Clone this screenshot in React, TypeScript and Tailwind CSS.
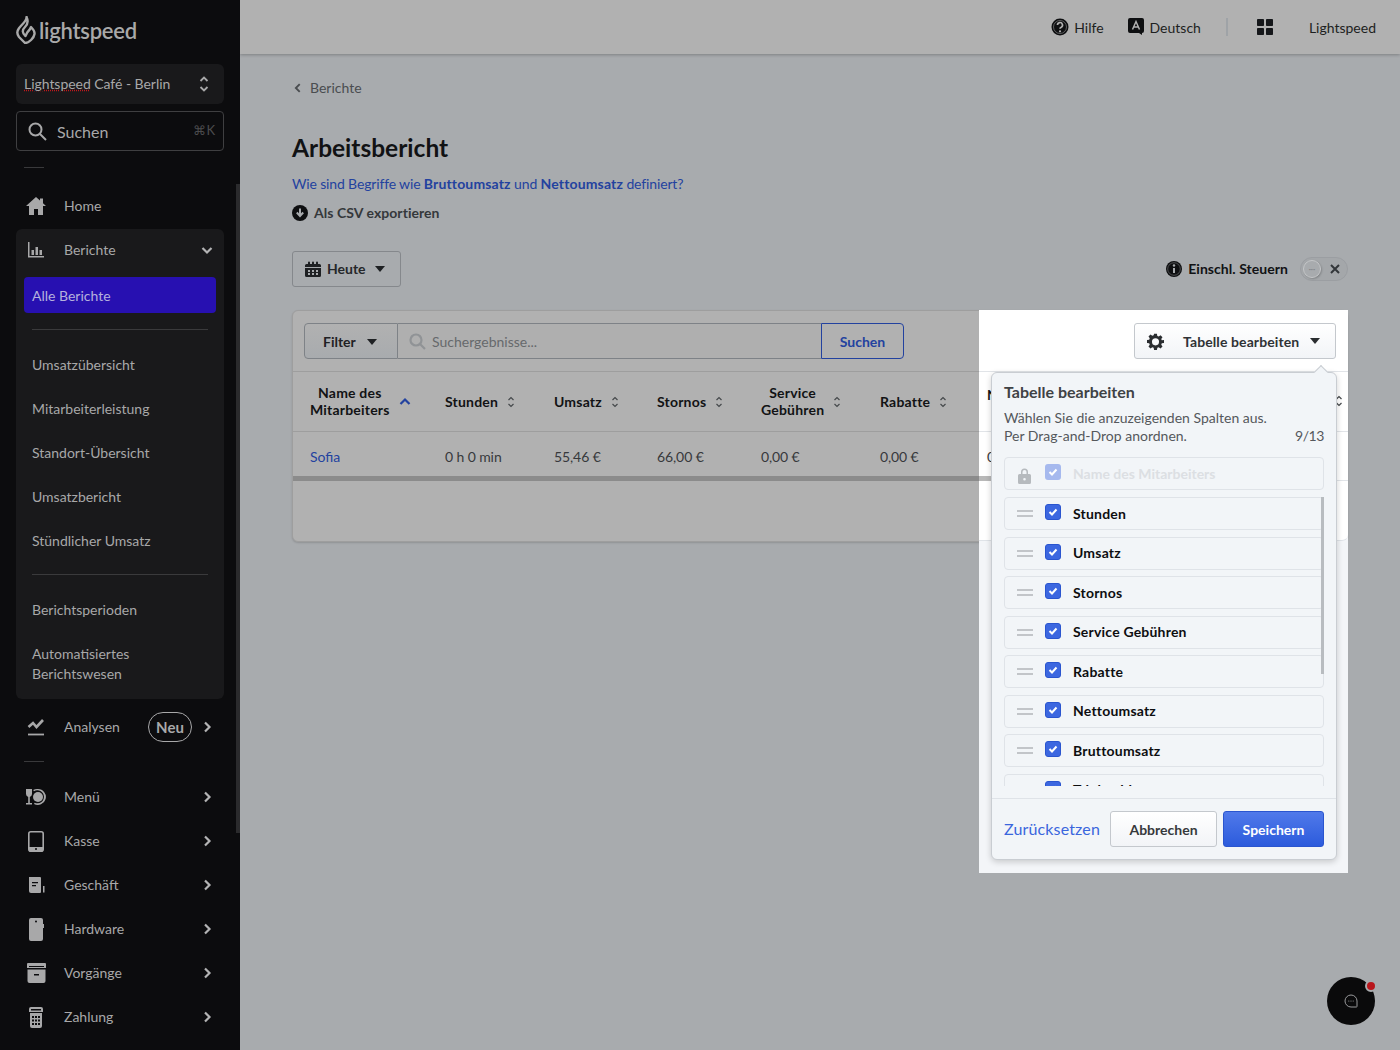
import React from "react";

const Chevron = ({ dir = "right", className = "" }: { dir?: "right" | "down" | "left" | "up"; className?: string }) => {
  const d = { right: "M5 2.5 9.5 7 5 11.5", left: "M9 2.5 4.5 7 9 11.5", down: "M2.5 5 7 9.5 11.5 5", up: "M2.5 9 7 4.5 11.5 9" }[dir];
  return (
    <svg width="14" height="14" viewBox="0 0 14 14" fill="none" stroke="currentColor" strokeWidth="2.2" className={className}>
      <path d={d} />
    </svg>
  );
};

const Caret = ({ className = "" }: { className?: string }) => (
  <svg width="10" height="6" viewBox="0 0 10 6" className={className} fill="currentColor">
    <path d="M0 0h10L5 6z" />
  </svg>
);

const Sort = ({ className = "" }: { className?: string }) => (
  <svg width="8" height="12" viewBox="0 0 8 12" fill="none" stroke="currentColor" strokeWidth="1.2" className={className}>
    <path d="M1.5 4 4 1.5 6.5 4M1.5 8 4 10.5 6.5 8" />
  </svg>
);

const Home = () => (
  <svg width="20" height="18" viewBox="0 0 20 18" fill="currentColor"><path d="M10 0 0 9h3v9h5v-6h4v6h5V9h3l-3-2.7V1.500h-3v2.100z" /></svg>
);
const Bars = () => (
  <svg width="18" height="16" viewBox="0 0 18 16" fill="currentColor"><path d="M1 0h1.500v14H17v1.500H1z" /><path d="M4.500 8h2.500v5H4.500zM8.500 5h2.500v8H8.500zM12.500 8h2.500v5h-2.500z" /></svg>
);
const Trend = () => (
  <svg width="18" height="18" viewBox="0 0 18 18" fill="none" stroke="currentColor"><path d="M1.500 9 6 5l3.500 4L16 2" strokeWidth="2.600" /><path d="M1 16.500h16" strokeWidth="1.800" /></svg>
);
const MenuIcon = () => (
  <svg width="21" height="18" viewBox="0 0 21 18" fill="currentColor"><path d="M0 1h6v5a3 3 0 0 1-2.200 2.900V15H6v1.500H0V15h2.200V8.900A3 3 0 0 1 0 6z" /><path d="M12 1a8 8 0 1 1-4 15l.700-1.300A6.500 6.500 0 1 0 8 3.300L7.200 2A8 8 0 0 1 12 1z" /><circle cx="12" cy="9" r="5" /></svg>
);
const Tablet = () => (
  <svg width="16" height="21" viewBox="0 0 16 21" fill="none"><rect x=".8" y=".8" width="14.400" height="19.400" rx="2" stroke="currentColor" strokeWidth="1.600" /><path d="M1 16h14v3a1.500 1.500 0 0 1-1.500 1.500h-11A1.500 1.500 0 0 1 1 19z" fill="currentColor" /><circle cx="8" cy="18" r="1" fill="#0c0c0e" /></svg>
);
const Store = () => (
  <svg width="17" height="16" viewBox="0 0 17 16" fill="currentColor"><path d="M1 0h11a1 1 0 0 1 1 1v14a1 1 0 0 1-1 1H3a2 2 0 0 1-2-2z" /><path d="M15 9h1.500v6.500H15z" /><path d="M4 5h6v1.300H4zM4 8h4v1.300H4z" fill="#0c0c0e" /></svg>
);
const Hardware = () => (
  <svg width="15" height="23" viewBox="0 0 15 23" fill="currentColor"><path d="M2 0h10a2 2 0 0 1 2 2v4h1v4h-1v11a2 2 0 0 1-2 2H2a2 2 0 0 1-2-2V2a2 2 0 0 1 2-2z" /><circle cx="7" cy="3.500" r="1" fill="#0c0c0e" /></svg>
);
const Archive = () => (
  <svg width="19" height="20" viewBox="0 0 19 20" fill="currentColor"><path d="M1 0h17a1 1 0 0 1 1 1v4H0V1a1 1 0 0 1 1-1z" /><path d="M2 3h15v1H2z" fill="#0c0c0e" /><path d="M.500 6.500h18V18a2 2 0 0 1-2 2h-14a2 2 0 0 1-2-2z" /><path d="M7 11h5v1.500H7z" fill="#0c0c0e" /></svg>
);
const Payment = () => (
  <svg width="16" height="21" viewBox="0 0 16 21" fill="currentColor"><path d="M3 0h10a2 2 0 0 1 2 2v3H1V2a2 2 0 0 1 2-2z" /><path d="M3 2h10v1.500H3z" fill="#0c0c0e" /><path d="M2 6h12v13a2 2 0 0 1-2 2H4a2 2 0 0 1-2-2z" /><path d="M4 9h2v2H4zM7 9h2v2H7zM10 9h2v2h-2zM4 12.500h2v2H4zM7 12.500h2v2H7zM10 12.500h2v2h-2zM4 16h2v2H4zM7 16h2v2H7zM10 16h2v2h-2z" fill="#0c0c0e" /></svg>
);

const NavRow = ({ icon, label, badge, chevron = true }: { icon: React.ReactNode; label: string; badge?: boolean; chevron?: boolean }) => (
  <div className="flex h-11 items-center pl-4 pr-[26px] text-[#a8a8a9]">
    <span className="flex w-10 items-center justify-center">{icon}</span>
    <span className="ml-2 flex-1 text-sm">{label}</span>
    {badge && (
      <span className="mr-2 flex h-[30px] w-11 items-center justify-center rounded-[15px] border border-[#a8a8a9] text-[15px] font-bold">Neu</span>
    )}
    {chevron && <Chevron className="text-[#b4b4b5]" />}
  </div>
);

const SubItem = ({ children }: { children: React.ReactNode }) => (
  <div className="flex h-11 items-center pl-4 pr-2 text-sm text-[#a8a8a9]">{children}</div>
);

const Sidebar = () => (
  <aside className="relative flex h-[1050px] w-60 shrink-0 flex-col overflow-hidden bg-[#0c0c0e]">
    <div className="flex h-16 items-start pl-4 pt-4">
      <svg width="20" height="28" viewBox="0 0 20 28" className="text-[#a9a9a9]" fill="none" stroke="currentColor" strokeWidth="2.400" strokeLinejoin="round">
        <path d="M10.500 1 C11 5 5 9 2.500 13 C.500 16 1.500 19 3 21 L9 27 C13 27 18 22 18.500 18 C19 15 17 13 15 11 C14 14 12 15 11 17 L9.500 20 C6 17 6 14 9 11 C12 8 12 4 10.500 1 Z" />
      </svg>
      <span className="ml-[3px] text-[22px] font-semibold leading-[30px] tracking-[-0.25px] text-[#a9a9a9]">lightspeed</span>
    </div>
    <div className="mx-4 flex h-10 items-center justify-between rounded-md bg-[#19191b] pl-2 pr-[15px] text-sm tracking-[-0.04px] text-[#a8a8a9]">
      <span>
        <span className="underline decoration-[#c0181c] decoration-dotted">Lightspeed</span> Café - Berlin
      </span>
      <svg width="10" height="16" viewBox="0 0 10 16" fill="none" stroke="currentColor" strokeWidth="1.800"><path d="M1.500 5 5 1.500 8.500 5M1.500 11 5 14.500 8.500 11" /></svg>
    </div>
    <div className="mx-4 mt-[7px] flex h-10 items-center rounded border border-[#3f3f41] pl-[11px] pr-2 text-[#a8a8a9]">
      <svg width="19" height="19" viewBox="0 0 19 19" fill="none" stroke="currentColor" strokeWidth="2"><circle cx="7.500" cy="7.500" r="6" /><path d="m12 12 6 6" /></svg>
      <span className="ml-[10px] mt-px flex-1 text-base">Suchen</span>
      <span className="text-[13px] text-[#4b4b4d]">⌘K</span>
    </div>
    <div className="ml-6 mt-4 h-px w-5 bg-[#39393b]" />
    <div className="mt-4">
      <NavRow icon={<Home />} label="Home" chevron={false} />
    </div>
    <div className="mx-4 mt-px h-[470px] rounded-md bg-[#19191b]">
      <div className="-mx-4 -mt-px">
        <div className="flex h-11 items-center pl-4 pr-[26px] text-[#a8a8a9]">
          <span className="flex w-10 items-center justify-center"><Bars /></span>
          <span className="ml-2 flex-1 text-sm">Berichte</span>
          <Chevron dir="down" className="-mt-px text-[#b4b4b5]" />
        </div>
      </div>
      <div className="mx-2 mt-[5px] flex h-9 items-center rounded bg-[#2710b1] pl-2 pt-px text-sm text-[#b5b1dd]">Alle Berichte</div>
      <div className="mx-4 mt-4 h-px bg-[#3a3a3c]" />
      <div className="mt-[13px]">
        <SubItem>Umsatzübersicht</SubItem>
        <SubItem>Mitarbeiterleistung</SubItem>
        <SubItem>Standort-Übersicht</SubItem>
        <SubItem>Umsatzbericht</SubItem>
        <SubItem>Stündlicher Umsatz</SubItem>
      </div>
      <div className="mx-4 mt-[11px] h-px bg-[#3a3a3c]" />
      <div className="mt-[13px]">
        <SubItem>Berichtsperioden</SubItem>
        <div className="px-4 pt-3 text-sm leading-5 text-[#a8a8a9]">Automatisiertes<br />Berichtswesen</div>
      </div>
    </div>
    <div className="mt-[6px]">
      <NavRow icon={<Trend />} label="Analysen" badge />
    </div>
    <div className="ml-6 mt-[12px] h-px w-5 bg-[#39393b]" />
    <div className="mt-[13px]">
      <NavRow icon={<MenuIcon />} label="Menü" />
      <NavRow icon={<Tablet />} label="Kasse" />
      <NavRow icon={<Store />} label="Geschäft" />
      <NavRow icon={<Hardware />} label="Hardware" />
      <NavRow icon={<Archive />} label="Vorgänge" />
      <NavRow icon={<Payment />} label="Zahlung" />
    </div>
    <div className="absolute right-0 top-[184px] h-[649px] w-1 bg-[#2b2b2d]" />
  </aside>
);

const TopBar = () => (
  <header className="flex h-[54px] items-center justify-end bg-[#b1b1b1] pr-6 text-sm text-[#1d1f21] shadow-[0_1px_3px_rgba(0,0,0,0.25)]">
    <svg width="18" height="18" viewBox="0 0 18 18"><circle cx="9" cy="9" r="8.500" fill="#0e0f11" /><circle cx="9" cy="9" r="6.500" fill="none" stroke="#b1b1b1" strokeWidth=".5" /><path d="M6.500 7a2.500 2.500 0 1 1 3.700 2.200c-.8.400-1.200.8-1.200 1.600" fill="none" stroke="#b1b1b1" strokeWidth="1.700" /><circle cx="9" cy="13.300" r="1.100" fill="#b1b1b1" /></svg>
    <span className="ml-[5px] mt-px">Hilfe</span>
    <svg width="16" height="17" viewBox="0 0 16 17" className="ml-6 -mt-px"><path d="M2 0h12a2 2 0 0 1 2 2v11a2 2 0 0 1-2 2v2l-3-2H2a2 2 0 0 1-2-2V2a2 2 0 0 1 2-2z" fill="#0e0f11" /><path d="M4.500 11.500 8 3.500l3.500 8M5.800 9h4.400" fill="none" stroke="#b1b1b1" strokeWidth="1.500" /></svg>
    <span className="ml-[6px] mt-px">Deutsch</span>
    <div className="ml-[25px] h-[18px] w-[2px] bg-[#9fa3a7]" />
    <svg width="16" height="16" viewBox="0 0 16 16" fill="#15171a" className="ml-[29px]"><rect width="7" height="7" rx=".8" /><rect x="9" width="7" height="7" rx=".8" /><rect y="9" width="7" height="7" rx=".8" /><rect x="9" y="9" width="7" height="7" rx=".8" /></svg>
    <span className="ml-9 mt-px">Lightspeed</span>
  </header>
);

const Head = ({ children, active }: { children: React.ReactNode; active?: boolean }) => (
  <div className={active ? "flex items-center gap-2 pl-[17px] text-sm font-bold leading-[17px] tracking-[0.2px] text-[#121315]" : "flex items-center gap-[9px] pl-[18px] text-sm font-bold leading-[17px] tracking-[0.2px] text-[#121315]"}>
    <span className="-mt-px text-center">{children}</span>
    {active ? <Chevron dir="up" className="text-[#23429f]" /> : <Sort className="text-[#45484b]" />}
  </div>
);

const Cell = ({ children, blue }: { children: React.ReactNode; blue?: boolean }) => (
  <div className={blue ? "flex items-center pl-[17px] pt-[5px] text-sm text-[#23429f]" : "flex items-center pl-[18px] pt-[5px] text-sm tracking-[-0.1px] text-[#37393c]"}>{children}</div>
);

const Card = () => (
  <section className="mt-[23px] h-[232px] rounded-md border border-[#9e9e9e] bg-[#b1b1b1] shadow-[0_1px_2px_rgba(0,0,0,0.15)]">
    <div className="flex h-[61px] items-start border-b border-[#9e9e9e] pl-[11px] pt-3">
      <div className="flex h-9 w-[600px] text-sm">
        <div className="flex w-[94px] items-center justify-between rounded-l border border-[#7e8287] bg-gradient-to-b from-[#b1b1b1] to-[#a8abae] pl-[18px] pr-5 pt-px font-bold text-[#1f2124]">
          Filter <Caret className="text-[#1f2124]" />
        </div>
        <div className="flex flex-1 items-center border-y border-[#7e8287] bg-[#afafaf] pl-[11px] text-[#66696c]">
          <svg width="17" height="17" viewBox="0 0 17 17" fill="none" stroke="#909396" strokeWidth="2.200"><circle cx="7" cy="7" r="5.500" /><path d="m11 11 5 5" /></svg>
          <span className="ml-[6px] mt-px">Suchergebnisse...</span>
        </div>
        <div className="flex w-[83px] items-center justify-center rounded-r border border-[#23429f] pt-px font-bold text-[#23429f]">Suchen</div>
      </div>
    </div>
    <div className="grid h-[60px] grid-cols-[134px_109px_103px_104px_119px_107px_1fr] border-b border-[#9e9e9e]">
      <Head active>Name des<br />Mitarbeiters</Head>
      <Head>Stunden</Head>
      <Head>Umsatz</Head>
      <Head>Stornos</Head>
      <Head>Service<br />Gebühren</Head>
      <Head>Rabatte</Head>
    </div>
    <div className="grid h-11 grid-cols-[134px_109px_103px_104px_119px_107px_1fr]">
      <Cell blue>Sofia</Cell>
      <Cell>0 h 0 min</Cell>
      <Cell>55,46 €</Cell>
      <Cell>66,00 €</Cell>
      <Cell>0,00 €</Cell>
      <Cell>0,00 €</Cell>
    </div>
    <div className="h-[5px] bg-[#8b8b8b]" />
  </section>
);

const Check = ({ faded }: { faded?: boolean }) => (
  <span className={faded ? "flex h-4 w-4 items-center justify-center rounded-[3px] bg-[#a6b9ee]" : "flex h-4 w-4 items-center justify-center rounded-[3px] border border-[#2a55cf] bg-[#3c67e0]"}>
    <svg width="10" height="8" viewBox="0 0 10 8" fill="none" stroke="#fff" strokeWidth="2"><path d="m1.500 4 2.500 2.500 4.500-5" /></svg>
  </span>
);

const ColRow = ({ label }: { label: string }) => (
  <div className="flex h-[33px] shrink-0 items-center rounded border border-[#dfe3e8] pl-3">
    <span className="flex w-4 flex-col gap-[3px]">
      <span className="h-[2px] w-4 bg-[#c2c5c9]" />
      <span className="h-[2px] w-4 bg-[#c2c5c9]" />
    </span>
    <span className="ml-3 -mt-[3px]"><Check /></span>
    <span className="ml-3 text-sm font-bold tracking-[0.2px] text-[#0d0e10]">{label}</span>
  </div>
);

const Spotlight = () => (
  <div className="absolute left-[979px] top-[310px] h-[563px] w-[369px] overflow-hidden bg-[#f3f5f8]">
    <div className="h-[231px] rounded-br-md border-b border-[#dfe3e8] bg-white">
      <div className="flex h-[62px] items-start justify-end border-b border-[#e1e4e8] pr-3 pt-[13px]">
        <div className="flex h-9 w-[202px] items-center rounded-[3px] border border-[#c4c8cd] bg-gradient-to-b from-white to-[#f2f4f7] pl-3 pr-[15px] text-sm font-bold tracking-[0.1px] text-[#2f3235]">
          <svg width="17" height="17" viewBox="0 0 24 24" fill="#2a2d30"><path fillRule="evenodd" d="M10 1h4l.6 3.100 1.900.8 2.600-1.800 2.800 2.800-1.800 2.600.8 1.900L24 10v4l-3.100.6-.8 1.900 1.800 2.600-2.800 2.800-2.600-1.800-1.900.8L14 24h-4l-.6-3.100-1.900-.8-2.600 1.800-2.800-2.800 1.800-2.600-.8-1.900L0 14v-4l3.100-.6.800-1.900-1.800-2.600 2.800-2.800 2.600 1.800 1.900-.8zM12 7.500a5 5 0 1 0 0 10 5 5 0 0 0 0-10z" /></svg>
          <span className="ml-[19px] mt-px flex-1">Tabelle bearbeiten</span>
          <Caret className="text-[#2a2d30]" />
        </div>
      </div>
      <div className="relative h-[60px] border-b border-[#e1e4e8]">
        <span className="absolute left-2 top-[13px] text-sm font-bold text-[#121315]">N</span>
        <Sort className="absolute right-[5px] top-[23px] text-[#45484b]" />
      </div>
      <div className="relative h-[44px]">
        <span className="absolute left-2 top-[15px] text-sm text-[#37393c]">0</span>
      </div>
      <div className="flex h-[5px]">
        <div className="w-3 bg-[#b8b8b8]" />
        <div className="flex-1 border-b border-[#e1e4e8]" />
      </div>
    </div>
    <div className="absolute left-3 top-[62px] flex h-[488px] w-[346px] flex-col rounded-md border border-[#c9cdd2] bg-[#f2f5f8] shadow-[0_2px_6px_rgba(0,0,0,0.18)]">
      <div className="absolute -top-[6px] right-[10px] h-[10px] w-[10px] rotate-45 border-l border-t border-[#c9cdd2] bg-[#f2f5f8]" />
      <div className="px-3 pt-[9px]">
        <h2 className="text-base font-bold leading-[20px] text-[#3f4245]">Tabelle bearbeiten</h2>
        <p className="mt-[7px] text-sm leading-[18px] text-[#55585c]">Wählen Sie die anzuzeigenden Spalten aus.</p>
        <p className="flex justify-between text-sm leading-[18px] text-[#55585c]"><span>Per Drag-and-Drop anordnen.</span><span className="tracking-[-0.4px]">9/13</span></p>
        <div className="mt-[12px] flex h-[33px] items-center rounded border border-[#dfe3e8] pl-[13px]">
          <svg width="13" height="16" viewBox="0 0 13 16" fill="#b6babe" className="mt-1"><path fillRule="evenodd" d="M3 6V4a3.500 3.500 0 0 1 7 0v2h1.500A1.500 1.500 0 0 1 13 7.500v7a1.500 1.500 0 0 1-1.500 1.500h-10A1.500 1.500 0 0 1 0 14.500v-7A1.500 1.500 0 0 1 1.500 6zm1.500 0h4V4a2 2 0 0 0-4 0zm2 4a1.300 1.300 0 1 0 0 2.600 1.300 1.300 0 0 0 0-2.600z" /></svg>
          <span className="ml-[14px] -mt-[3px]"><Check faded /></span>
          <span className="ml-3 text-sm font-bold text-[#dcdfe3]">Name des Mitarbeiters</span>
        </div>
      </div>
      <div className="relative mx-3 mt-[7px] flex h-[289px] flex-col gap-[6.500px] overflow-hidden">
        <ColRow label="Stunden" />
        <ColRow label="Umsatz" />
        <ColRow label="Stornos" />
        <ColRow label="Service Gebühren" />
        <ColRow label="Rabatte" />
        <ColRow label="Nettoumsatz" />
        <ColRow label="Bruttoumsatz" />
        <ColRow label="Trinkgeld" />
        <div className="absolute right-0 top-0 h-[177px] w-[3px] bg-[#b8bcc0]" />
      </div>
      <div className="mt-3 flex flex-1 items-center border-t border-[#dfe3e8] px-3">
        <span className="flex-1 text-base tracking-[0.15px] text-[#3a66dd]">Zurücksetzen</span>
        <div className="flex h-9 w-[107px] items-center justify-center rounded-[3px] border border-[#c4c8cd] bg-gradient-to-b from-white to-[#f2f4f7] pt-px text-sm font-bold text-[#36393c]">Abbrechen</div>
        <div className="ml-[6px] flex h-9 w-[101px] items-center justify-center rounded-[3px] border border-[#2a55cf] bg-gradient-to-b from-[#5079ea] to-[#2c5bdc] pt-px text-sm font-bold text-white">Speichern</div>
      </div>
    </div>
  </div>
);

export default function App() {
  return (
    <div className="relative flex h-[1050px] w-[1400px] overflow-hidden bg-[#a8abae] font-['Lato','Noto_Sans',sans-serif]">
      <Sidebar />
      <main className="flex-1">
        <TopBar />
        <div className="px-[52px]">
          <div className="mt-[25px] flex h-[18px] items-center text-sm text-[#4a4d50]">
            <Chevron dir="left" className="h-3 w-3" />
            <span className="ml-[6px]">Berichte</span>
          </div>
          <h1 className="mt-[35px] text-[24.5px] font-bold leading-8 text-[#111214]">Arbeitsbericht</h1>
          <p className="mt-[11px] text-sm leading-[18px] tracking-[-0.15px] text-[#23429f]">
            Wie sind Begriffe wie <b className="tracking-[0.15px]">Bruttoumsatz</b> und <b className="tracking-[0.15px]">Nettoumsatz</b> definiert?
          </p>
          <div className="mt-[11px] flex h-[18px] items-center text-sm font-bold tracking-[0.05px] text-[#35383b]">
            <svg width="16" height="16" viewBox="0 0 16 16"><circle cx="8" cy="8" r="8" fill="#0e0f11" /><path d="M8 3.500v6.500M4.800 7.500 8 11l3.200-3.500" fill="none" stroke="#a8abae" strokeWidth="2" /></svg>
            <span className="ml-[6px]">Als CSV exportieren</span>
          </div>
          <div className="mt-[29px] flex items-center justify-between">
            <div className="flex h-9 w-[109px] items-center rounded-[3px] border border-[#85888c] pl-3 text-sm font-bold text-[#25272a]">
              <svg width="16" height="16" viewBox="0 0 16 16" fill="#1e2023"><path fillRule="evenodd" d="M1.500 3H3V1.500a1 1 0 0 1 2 0V3h2V1.500a1 1 0 0 1 2 0V3h2V1.500a1 1 0 0 1 2 0V3h1.500A1.500 1.500 0 0 1 16 4.500V6H0V4.500A1.500 1.500 0 0 1 1.500 3zM0 7h16v7.500a1.500 1.500 0 0 1-1.500 1.500h-13A1.500 1.500 0 0 1 0 14.500zm3 2v2h2V9zm4 0v2h2V9zm4 0v2h2V9zM3 12v2h2v-2zm4 0v2h2v-2zm4 0v2h2v-2z" /></svg>
              <span className="ml-[6px]">Heute</span>
              <Caret className="ml-[9px] text-[#1e2023]" />
            </div>
            <div className="flex items-center text-sm font-bold tracking-[0.05px] text-[#111214]">
              <svg width="16" height="16" viewBox="0 0 16 16"><circle cx="8" cy="8" r="8" fill="#0e0f11" /><circle cx="8" cy="8" r="6.300" fill="none" stroke="#a8abae" strokeWidth=".4" /><path d="M8 7v5" stroke="#a8abae" strokeWidth="2" /><circle cx="8" cy="4.500" r="1.200" fill="#a8abae" /></svg>
              <span className="ml-[6px]">Einschl. Steuern</span>
              <div className="relative ml-3 h-6 w-12 rounded-full border border-[#9b9ea2] bg-[#a4a7aa]">
                <div className="absolute left-[2px] top-[2px] flex h-[18px] w-[18px] items-center justify-center rounded-full border border-[#c5c7c9] bg-[#a8abae] text-[8px] leading-none text-[#85888b] shadow-[1px_1px_2px_rgba(0,0,0,0.2)]">···</div>
                <svg width="10" height="10" viewBox="0 0 10 10" fill="none" stroke="#33363a" strokeWidth="2" className="absolute right-[7px] top-[6px]"><path d="m1 1 8 8M9 1 1 9" /></svg>
              </div>
            </div>
          </div>
          <Card />
        </div>
      </main>
      <Spotlight />
      <div className="absolute left-[1327px] top-[977px] flex h-12 w-12 items-center justify-center rounded-full bg-[#0a0a0b]">
        <svg width="14" height="14" viewBox="0 0 14 14" fill="none"><path d="M7 1a6 6 0 1 0 0 12h5.500c.4 0 .5-.3.500-.5V7a6 6 0 0 0-6-6z" stroke="#98999b" strokeWidth="1" /><circle cx="4.800" cy="7" r=".6" fill="#98999b" /><circle cx="7" cy="7" r=".6" fill="#98999b" /><circle cx="9.200" cy="7" r=".6" fill="#98999b" /></svg>
        <span className="absolute -right-[2px] top-[3px] h-3 w-3 rounded-full border-2 border-[#a8abae] bg-[#b8161c]" />
      </div>
    </div>
  );
}
